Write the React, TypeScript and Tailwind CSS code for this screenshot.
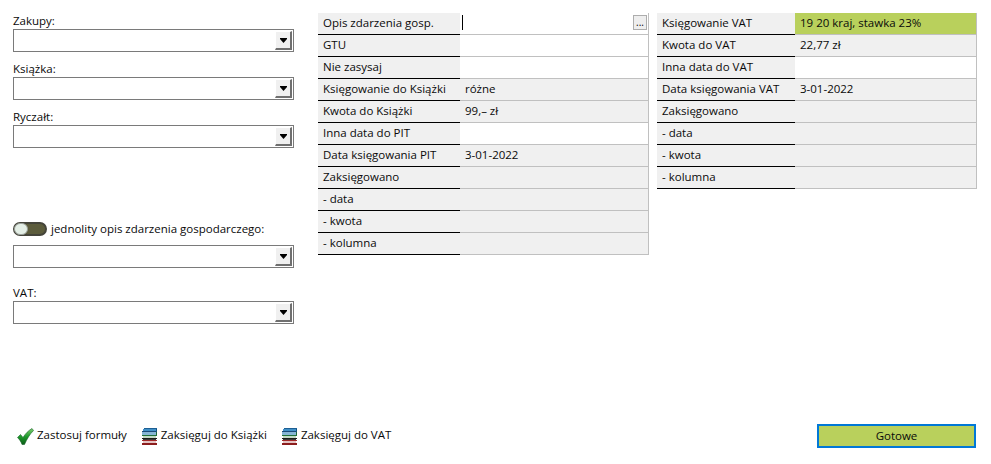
const font = "font-['Open_Sans','Noto_Sans',sans-serif] text-[11.5px] text-[#0a0a0a]";

function Combo() {
  return (
    <div className="h-[23px] w-[281px] border border-[#7a7a7a] bg-white flex justify-end items-stretch p-px">
      <div className="w-[17px] h-[19px] bg-[#f0f0f0] border-r-2 border-b-2 border-[#707070] border-t border-l border-t-white border-l-white flex items-center justify-center">
        <svg width="9" height="5" viewBox="0 0 9 5"><path d="M1 0h7v1L4.500 5 1 1z" fill="#000" /></svg>
      </div>
    </div>
  );
}

function Label({ children }: { children: string }) {
  return <div className="h-[16px] leading-[16px]">{children}</div>;
}

type Row = { l: string; v?: string; white?: boolean; green?: boolean; dots?: boolean; caret?: boolean };

function Grid({ rows, labelW, width }: { rows: Row[]; labelW: string; width: string }) {
  return (
    <div className={width + " shrink-0 border-r border-[#c0c0c0] h-fit"}>
      {rows.map((r) => (
        <div key={r.l} className="flex h-[22px]">
          <div className={labelW + " shrink-0 bg-[#f0f0f0] border-b border-black pl-[5px] leading-[20px] h-[22px]"}>{r.l}</div>
          <div
            className={
              "flex-1 h-[22px] border-b border-[#c0c0c0] pl-[5px] leading-[20px] flex items-start justify-between " +
              (r.green ? "bg-[#b9d05c]" : r.white ? "bg-white" : "bg-[#f0f0f0]")
            }
          >
            {r.caret ? <span className="block w-px h-[15px] mt-[2px] -ml-[3px] bg-black" /> : <span>{r.v}</span>}
            {r.dots && (
              <span className="w-[14px] h-[15px] mt-[2px] mr-[1px] border border-[#adadad] bg-[#eeeeee] text-[10px] leading-[13px] text-center">...</span>
            )}
          </div>
        </div>
      ))}
    </div>
  );
}

function Check() {
  return (
    <svg width="17" height="17" viewBox="0 0 17 17">
      <defs>
        <linearGradient id="chk" x1="0" y1="0" x2="0" y2="1">
          <stop offset="0" stopColor="#7fcf6e" />
          <stop offset="0.5" stopColor="#1f9a2c" />
          <stop offset="1" stopColor="#0a5c16" />
        </linearGradient>
      </defs>
      <path d="M0.500 9.500l3-3 2.500 3C8.500 5.500 11.500 2.500 15 0.500l1.500 2C12.500 6.500 10 11 7.500 16.500H5C4 13.500 2.500 11.500 0.500 9.500z" fill="url(#chk)" stroke="#17602a" strokeWidth="0.6" />
    </svg>
  );
}

function Books() {
  return (
    <svg width="17" height="17" viewBox="0 0 17 17" shapeRendering="crispEdges">
      <rect x="3" y="0" width="13" height="1" fill="#1d5f94" />
      <rect x="2" y="1" width="13" height="2" fill="#3f8fc6" />
      <rect x="15" y="1" width="1" height="3" fill="#17507f" />
      <rect x="1" y="3" width="14" height="1" fill="#1a4a78" />
      <rect x="1" y="4" width="14" height="3" fill="#86b6d6" />
      <rect x="15" y="4" width="1" height="4" fill="#1f6b3a" />
      <rect x="1" y="7" width="14" height="1" fill="#20703a" />
      <rect x="2" y="8" width="13" height="2" fill="#c2dcc6" />
      <rect x="1" y="10" width="15" height="1" fill="#1c1c1c" />
      <rect x="2" y="11" width="13" height="1" fill="#3a3a3a" />
      <rect x="1" y="12" width="15" height="1" fill="#a32a2a" />
      <rect x="2" y="13" width="13" height="2" fill="#e4c4c4" />
      <rect x="1" y="15" width="15" height="2" fill="#8c1d1d" />
    </svg>
  );
}

function Action({ icon, text }: { icon: React.ReactNode; text: string }) {
  return (
    <div className="flex items-center gap-[3px] h-[17px]">
      {icon}
      <span className="pb-[2px]">{text}</span>
    </div>
  );
}

const leftRows: Row[] = [
  { l: "Opis zdarzenia gosp.", white: true, caret: true, dots: true },
  { l: "GTU", white: true },
  { l: "Nie zasysaj", white: true },
  { l: "Księgowanie do Książki", v: "różne" },
  { l: "Kwota do Książki", v: "99,– zł" },
  { l: "Inna data do PIT", white: true },
  { l: "Data księgowania PIT", v: "3-01-2022" },
  { l: "Zaksięgowano" },
  { l: "- data" },
  { l: "- kwota" },
  { l: "- kolumna" },
];

const rightRows: Row[] = [
  { l: "Księgowanie VAT", v: "19 20 kraj, stawka 23%", green: true },
  { l: "Kwota do VAT", v: "22,77 zł" },
  { l: "Inna data do VAT", white: true },
  { l: "Data księgowania VAT", v: "3-01-2022" },
  { l: "Zaksięgowano" },
  { l: "- data" },
  { l: "- kwota" },
  { l: "- kolumna" },
];

export default function App() {
  return (
    <div className={font + " w-[991px] h-[464px] bg-white flex flex-col justify-between pt-[13px] pb-[16px] pl-[13px] pr-[15px] overflow-hidden"}>
      <div className="flex items-start">
        <div className="w-[281px] shrink-0 flex flex-col">
          <Label>Zakupy:</Label>
          <Combo />
          <div className="mt-[9px]"><Label>Książka:</Label></div>
          <Combo />
          <div className="mt-[9px]"><Label>Ryczałt:</Label></div>
          <Combo />
          <div className="mt-[73px] h-[16px] flex items-center gap-[4px]">
            <div className="w-[34px] h-[14px] rounded-full bg-[#5c5c3c] border-2 border-[#44443a] relative">
              <div className="absolute -left-[1px] -top-[1px] w-[14px] h-[12px] rounded-full bg-[#e4efe6] border border-[#9aa09a]" />
            </div>
            <span>jednolity opis zdarzenia gospodarczego:</span>
          </div>
          <div className="mt-[8px]"><Combo /></div>
          <div className="mt-[17px]"><Label>VAT:</Label></div>
          <Combo />
        </div>
        <div className="ml-[24px]">
          <Grid rows={leftRows} labelW="w-[142px]" width="w-[331px]" />
        </div>
        <div className="ml-[8px]">
          <Grid rows={rightRows} labelW="w-[138px]" width="w-[320px]" />
        </div>
      </div>
      <div className="flex items-center justify-between">
        <div className="flex items-center gap-[14px] pl-[4px]">
          <Action icon={<Check />} text="Zastosuj formuły" />
          <Action icon={<Books />} text="Zaksięguj do Książki" />
          <Action icon={<Books />} text="Zaksięguj do VAT" />
        </div>
        <button className="w-[159px] h-[24px] border-2 border-[#0078d7] bg-[#b9d05c] leading-[18px]">Gotowe</button>
      </div>
    </div>
  );
}
